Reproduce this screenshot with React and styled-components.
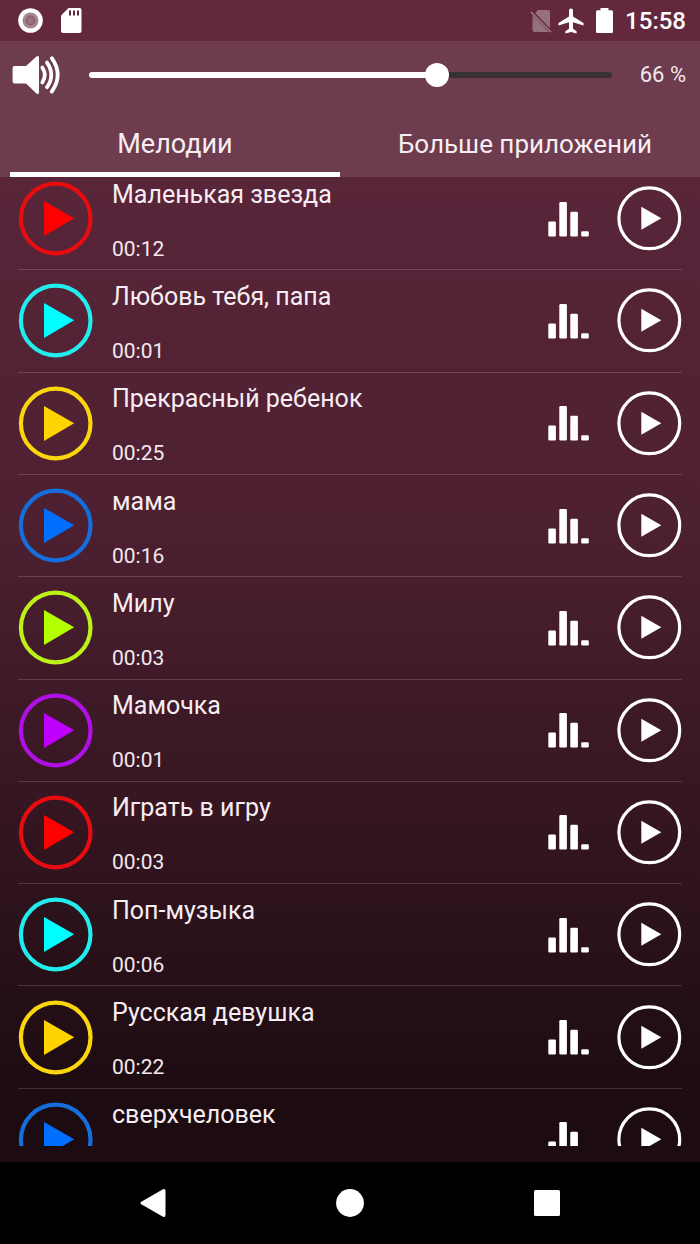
import React, { useState } from 'react';
import styled, { createGlobalStyle } from 'styled-components';

const songs = [
  { title: 'Маленькая звезда', time: '00:12', color: '#ff0000', ring: '#e60c10' },
  { title: 'Любовь тебя, папа', time: '00:01', color: '#00ffff', ring: '#22ecee' },
  { title: 'Прекрасный ребенок', time: '00:25', color: '#ffd400', ring: '#fcd60c' },
  { title: 'мама', time: '00:16', color: '#006eff', ring: '#146edc' },
  { title: 'Милу', time: '00:03', color: '#b4ff00', ring: '#bdf218' },
  { title: 'Мамочка', time: '00:01', color: '#bf00ff', ring: '#b010e8' },
  { title: 'Играть в игру', time: '00:03', color: '#ff0000', ring: '#e60c10' },
  { title: 'Поп-музыка', time: '00:06', color: '#00ffff', ring: '#22ecee' },
  { title: 'Русская девушка', time: '00:22', color: '#ffd400', ring: '#fcd60c' },
  { title: 'сверхчеловек', time: '', color: '#006eff', ring: '#146edc' },
];

const tabs = ['Мелодии', 'Больше приложений'];

const MAX_VOLUME = 15;

const GlobalStyle = createGlobalStyle`
  * {
    box-sizing: border-box;
  }
  body {
    margin: 0;
    background: #000;
    color: #fff;
    font-family: Roboto, 'Noto Sans', sans-serif;
  }
  button {
    display: flex;
    align-items: center;
    justify-content: center;
    padding: 0;
    border: 0;
    background: none;
    color: inherit;
    font: inherit;
    cursor: pointer;
  }
  svg {
    display: block;
  }
`;

const Screen = styled.div`
  display: flex;
  flex-direction: column;
  height: 100vh;
`;

const AppArea = styled.div`
  display: flex;
  flex: 1;
  flex-direction: column;
  min-height: 0;
  padding-bottom: 16px;
  background: linear-gradient(#652a40 0, #582539 16%, #4d2031 45%, #1c0b11 95%);
`;

const StatusBar = styled.div`
  display: flex;
  flex: none;
  align-items: center;
  justify-content: space-between;
  height: 41px;
  padding: 0 14px 0 18px;
  background: #64283e;
`;

const StatusGroup = styled.div`
  display: flex;
  align-items: center;
  gap: ${(p) => p.$gap}px;
`;

const Clock = styled.time`
  font-size: 24px;
  font-weight: 500;
  line-height: 28px;
`;

const Header = styled.header`
  flex: none;
  background: #6d3c4e;
`;

const VolumeRow = styled.div`
  display: flex;
  align-items: center;
  height: 68px;
  padding: 0 14px 0 12px;
  gap: 28px;
`;

const Slider = styled.input`
  flex: 1;
  min-width: 0;
  height: 6px;
  margin: 0;
  border-radius: 3px;
  appearance: none;
  background: linear-gradient(to right, #fff ${(p) => p.$fill}%, #393235 ${(p) => p.$fill}%);

  /* lets the thumb's centre reach both ends of the line */
  &::-webkit-slider-runnable-track {
    margin: 0 -12px;
  }
  &::-webkit-slider-thumb {
    appearance: none;
    width: 24px;
    height: 24px;
    border-radius: 50%;
    background: #fff;
  }
`;

const Percent = styled.output`
  color: #f3e9ed;
  font-size: 22px;
  line-height: 28px;
  white-space: nowrap;
`;

const Tabs = styled.div`
  display: grid;
  grid-template-columns: 1fr 1fr;
`;

const Tab = styled.button`
  && {
    height: 68px;
    margin: 0 10px;
    border-top: 7px solid transparent;
    border-bottom: 5px solid ${(p) => (p.$active ? '#fff' : 'transparent')};
    color: #f8eef2;
    font-size: ${(p) => (p.$active ? 27 : 26)}px;
    line-height: 32px;
    white-space: nowrap;
  }
`;

const ListView = styled.main`
  flex: 1;
  min-height: 0;
  overflow: hidden;
`;

const SongList = styled.ul`
  display: grid;
  grid-auto-rows: 1fr;
  min-height: 1023px;
  margin: -9px 18px 0;
  padding: 0;
  list-style: none;
`;

const SongRow = styled.li`
  display: flex;
  align-items: center;
  gap: 28px;
  border-bottom: 1px solid rgba(255, 255, 255, 0.16);
`;

const SongText = styled.div`
  display: flex;
  flex: 1;
  flex-direction: column;
  gap: 26px;
  min-width: 0;
  margin-left: -9px;
  padding-top: 2px;
`;

const Title = styled.span`
  color: #f8eef2;
  font-size: 25px;
  line-height: 32px;
`;

const Duration = styled.span`
  min-height: 24px;
  color: #f3e9ed;
  font-size: 21px;
  line-height: 24px;
`;

const NavBar = styled.nav`
  display: flex;
  flex: none;
  align-items: center;
  justify-content: center;
  gap: 169px;
  height: 82px;
  background: #000;
`;

const RecordIcon = () => (
  <svg width="25" height="25" viewBox="0 0 25 25">
    <circle cx="12.5" cy="12.5" r="12.3" fill="#fff" />
    <circle cx="12.5" cy="12.5" r="8" fill="#a58893" />
    <circle cx="12.5" cy="12.5" r="5" fill="#8a6070" />
    <circle cx="12.5" cy="12.5" r="3.2" fill="#9a7482" />
  </svg>
);

const SdCardIcon = () => (
  <svg width="21" height="25" viewBox="0 0 21 25">
    <path fill="#fff" d="M7.5 0H18.5a2 2 0 0 1 2 2V23a2 2 0 0 1-2 2H2a2 2 0 0 1-2-2V7.5Z" />
    <path stroke="#64283e" strokeWidth="2" d="M9 2.5v5M13 2.5v5M17 2.5v5" />
  </svg>
);

const NoSimIcon = () => (
  <svg width="22" height="24" viewBox="0 0 22 24">
    <path
      fill="#95707f"
      d="M8 1H18a2 2 0 0 1 2 2v16.2L5.2 4Z M2.6 6.6 19 23H4.5a2 2 0 0 1-2-2Z"
    />
    <path stroke="#95707f" strokeWidth="1.8" d="M.8 2.8 21 23.2" />
  </svg>
);

const PlaneIcon = () => (
  <svg width="26" height="26" viewBox="0 0 26 26">
    <path
      fill="#fff"
      d="M25.5 17.5v-2.6L15 8.5V2.4a2 2 0 0 0-4 0v6.1L.5 14.9v2.6L11 14.3v6.4l-3.6 2.6v2.2l5.6-1.6 5.6 1.6v-2.2L15 20.7v-6.4Z"
    />
  </svg>
);

const BatteryIcon = () => (
  <svg width="17" height="25" viewBox="0 0 17 25">
    <path
      fill="#fff"
      d="M4.5 0h8v2.2h3a1.5 1.5 0 0 1 1.5 1.5v19.8a1.5 1.5 0 0 1-1.5 1.5h-14a1.5 1.5 0 0 1-1.5-1.5V3.7a1.5 1.5 0 0 1 1.5-1.5h3Z"
    />
  </svg>
);

const SpeakerIcon = () => (
  <svg width="49" height="40" viewBox="0 0 49 40">
    <path
      fill="#fff"
      d="M2.5 11H14L24.500 1.400Q27 0 27 3V37Q27 40 24.500 38.500L14 28.500H2.500Q.6 28.500.6 26.500V13Q.6 11 2.500 11Z"
    />
    <g fill="none" stroke="#fff" strokeWidth="3.8" strokeLinecap="round">
      <path d="M30.300 12.500q5 7.500 0 15" />
      <path d="M35 7.600q8.600 12.200 0 24.600" />
      <path d="M39.800 3.200q11.800 16.600 0 33.400" />
    </g>
  </svg>
);

const BarsIcon = () => (
  <svg width="41" height="36" viewBox="0 0 41 36" fill="#fff">
    <rect x="0.3" y="20.5" width="7.6" height="15" rx="1.2" />
    <rect x="11.3" y="1" width="7.6" height="34.5" rx="1.2" />
    <rect x="22.3" y="10.8" width="7.6" height="24.7" rx="1.2" />
    <rect x="33.2" y="30.3" width="7.6" height="5.2" rx="1.2" />
  </svg>
);

const ColorPlayIcon = ({ color, ring }) => (
  <svg width="75" height="75" viewBox="0 0 75 75">
    <circle cx="37.7" cy="37.5" r="34.8" fill="none" stroke={ring} strokeWidth="4.2" />
    <path fill={color} d="M26 20 56.2 37.3 26 55Z" />
  </svg>
);

const PlayIcon = () => (
  <svg width="65" height="65" viewBox="0 0 65 65">
    <circle cx="32.3" cy="32.3" r="30.4" fill="none" stroke="#fff" strokeWidth="3.2" />
    <path fill="#fff" d="M24.300 20.700 44.300 32.300 24.300 43.800Z" />
  </svg>
);

const NavIcon = ({ children }) => (
  <svg width="28" height="28" viewBox="0 0 28 28" fill="#fff">
    {children}
  </svg>
);

const App = () => {
  const [volume, setVolume] = useState(10);
  const [activeTab, setActiveTab] = useState(0);
  const fill = (volume / MAX_VOLUME) * 100;

  return (
    <Screen>
      <GlobalStyle />
      <AppArea>
        <StatusBar>
          <StatusGroup $gap={18}>
            <RecordIcon />
            <SdCardIcon />
          </StatusGroup>
          <StatusGroup $gap={12}>
            <StatusGroup $gap={6}>
              <NoSimIcon />
              <PlaneIcon />
            </StatusGroup>
            <BatteryIcon />
            <Clock>15:58</Clock>
          </StatusGroup>
        </StatusBar>
        <Header>
          <VolumeRow>
            <SpeakerIcon />
            <Slider
              type="range"
              aria-label="Громкость"
              min="0"
              max={MAX_VOLUME}
              value={volume}
              $fill={fill}
              onChange={(e) => setVolume(Number(e.target.value))}
            />
            <Percent>{Math.floor(fill)} %</Percent>
          </VolumeRow>
          <Tabs role="tablist">
            {tabs.map((name, i) => (
              <Tab
                key={name}
                type="button"
                role="tab"
                aria-selected={i === activeTab}
                $active={i === activeTab}
                onClick={() => setActiveTab(i)}
              >
                {name}
              </Tab>
            ))}
          </Tabs>
        </Header>
        <ListView>
          <SongList>
            {songs.map((song) => (
              <SongRow key={song.title}>
                <button type="button" aria-label={`Слушать: ${song.title}`}>
                  <ColorPlayIcon color={song.color} ring={song.ring} />
                </button>
                <SongText>
                  <Title>{song.title}</Title>
                  <Duration>{song.time}</Duration>
                </SongText>
                <button type="button" aria-label="Громкость мелодии">
                  <BarsIcon />
                </button>
                <button type="button" aria-label="Открыть мелодию">
                  <PlayIcon />
                </button>
              </SongRow>
            ))}
          </SongList>
        </ListView>
      </AppArea>
      <NavBar>
        <button type="button" aria-label="Назад">
          <NavIcon>
            <path d="M2.300 12.800 24 .3Q26.500-.6 26.500 2V26Q26.500 28.600 24 27.700L2.300 15.200Q.5 14 2.300 12.800Z" />
          </NavIcon>
        </button>
        <button type="button" aria-label="Домой">
          <NavIcon>
            <circle cx="14" cy="14" r="13.9" />
          </NavIcon>
        </button>
        <button type="button" aria-label="Недавние">
          <NavIcon>
            <rect x="1" y="1" width="26" height="26" rx="1.5" />
          </NavIcon>
        </button>
      </NavBar>
    </Screen>
  );
};

export default App;
